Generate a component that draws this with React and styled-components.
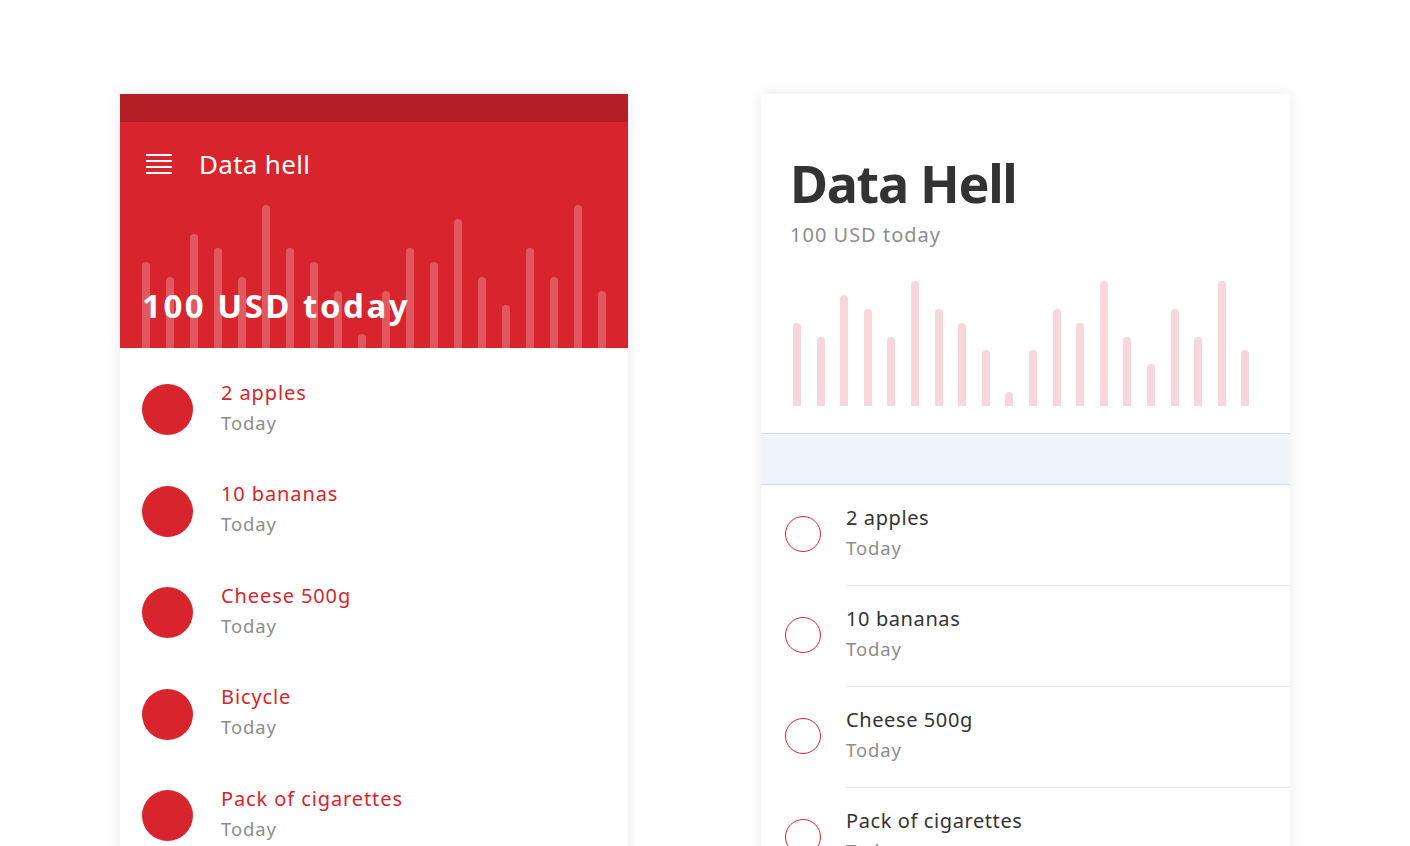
import React from "react";
import styled, { createGlobalStyle } from "styled-components";

const GlobalStyle = createGlobalStyle`
  html, body {
    margin: 0;
    padding: 0;
    background: #ffffff;
  }
  body {
    font-family: "Noto Sans", "Open Sans", Arial, sans-serif;
  }
`;

const items = ["2 apples", "10 bananas", "Cheese 500g", "Bicycle", "Pack of cigarettes"];

const redData = [6, 5, 8, 7, 5, 10, 7, 6, 4, 1, 4, 7, 6, 9, 5, 3, 7, 5, 10, 4];
const pinkData = [6, 5, 8, 7, 5, 9, 7, 6, 4, 1, 4, 7, 6, 9, 5, 3, 7, 5, 9, 4];

function MenuIcon() {
  return (
    <svg width="26" height="20" viewBox="0 0 26 20">
      {[1, 7, 13, 19].map((y) => (
        <rect key={y} x="0" y={y - 1} width="26" height="2" fill="#fff" />
      ))}
    </svg>
  );
}

function App() {
  return (
    <>
      <GlobalStyle />
      <Page>
        <PhoneCard>
          <StatusBar />
          <RedHeader>
            <Bars $left={22} $gap={16}>
              {redData.map((v, i) => (
                <RedBar key={i} style={{ height: v * 14.3 }} />
              ))}
            </Bars>
            <HeaderContent>
              <Toolbar>
                <MenuIcon />
                <ToolbarTitle>Data hell</ToolbarTitle>
              </Toolbar>
              <HeroTotal>100 USD today</HeroTotal>
            </HeaderContent>
          </RedHeader>
          <RedList>
            {items.map((name) => (
              <RedRow key={name}>
                <Dot />
                <RedText>
                  <RedTitle>{name}</RedTitle>
                  <When>Today</When>
                </RedText>
              </RedRow>
            ))}
          </RedList>
        </PhoneCard>

        <LightCard>
          <LightTop>
            <BigTitle>Data Hell</BigTitle>
            <SubTotal>100 USD today</SubTotal>
            <PinkChart>
              {pinkData.map((v, i) => (
                <PinkBar key={i} style={{ height: v * 13.9 }} />
              ))}
            </PinkChart>
          </LightTop>
          <Band />
          <LightList>
            {items
              .filter((n) => n !== "Bicycle")
              .map((name) => (
                <LightRow key={name}>
                  <Ring />
                  <LightText>
                    <DarkTitle>{name}</DarkTitle>
                    <When>Today</When>
                  </LightText>
                </LightRow>
              ))}
          </LightList>
        </LightCard>
      </Page>
    </>
  );
}

const Page = styled.div`
  height: 846px;
  overflow: hidden;
  display: flex;
  align-items: flex-start;
  padding: 94px 0 0 120px;
  box-sizing: border-box;
  gap: 133px;
`;

const PhoneCard = styled.div`
  width: 508px;
  height: 900px;
  background: #fff;
  box-shadow: 0 0 14px rgba(0, 0, 0, 0.09);
  flex-shrink: 0;
`;

const StatusBar = styled.div`
  height: 28px;
  background: #b41e25;
`;

const RedHeader = styled.div`
  height: 226px;
  background: #d8252d;
  display: grid;
  grid-template-areas: "stack";
  overflow: hidden;
`;

const Bars = styled.div`
  grid-area: stack;
  display: flex;
  align-items: flex-end;
  gap: ${(p) => p.$gap}px;
  padding-left: ${(p) => p.$left}px;
`;

const RedBar = styled.div`
  width: 8px;
  flex-shrink: 0;
  border-radius: 4px 4px 0 0;
  background: rgba(255, 255, 255, 0.24);
`;

const HeaderContent = styled.div`
  grid-area: stack;
  display: flex;
  flex-direction: column;
  justify-content: space-between;
  position: relative;
`;

const Toolbar = styled.div`
  height: 84px;
  display: flex;
  align-items: center;
  gap: 27px;
  padding-left: 26px;
  color: #fff;
`;

const ToolbarTitle = styled.div`
  font-size: 26px;
  line-height: 32px;
  letter-spacing: 0.3px;
`;

const HeroTotal = styled.div`
  color: #fff;
  font-size: 33px;
  font-weight: 700;
  line-height: 40px;
  padding: 0 0 22px 22px;
  letter-spacing: 2.5px;
`;

const RedList = styled.div`
  padding-top: 11px;
`;

const RedRow = styled.div`
  height: 101.5px;
  display: flex;
  align-items: center;
  gap: 28px;
  padding-left: 22px;
`;

const Dot = styled.div`
  width: 51px;
  height: 51px;
  border-radius: 50%;
  background: #d8252d;
  flex-shrink: 0;
`;

const RedText = styled.div`
  padding-bottom: 4px;
`;

const RedTitle = styled.div`
  color: #d8252d;
  font-size: 20px;
  line-height: 30px;
  letter-spacing: 0.9px;
`;

const When = styled.div`
  color: #8d8d8d;
  font-size: 18.5px;
  line-height: 30px;
  letter-spacing: 0.9px;
`;

const LightCard = styled.div`
  width: 529px;
  height: 900px;
  background: #fff;
  box-shadow: 0 0 14px rgba(0, 0, 0, 0.09);
  flex-shrink: 0;
`;

const LightTop = styled.div`
  padding: 59px 0 27px 29px;
`;

const BigTitle = styled.h1`
  margin: 0;
  color: #333333;
  font-size: 52px;
  line-height: 60px;
  font-weight: 700;
  letter-spacing: -1.3px;
`;

const SubTotal = styled.div`
  margin-top: 10px;
  color: #8d8d8d;
  font-size: 20px;
  line-height: 24px;
  letter-spacing: 1px;
`;

const PinkChart = styled.div`
  height: 159px;
  display: flex;
  align-items: flex-end;
  gap: 15.6px;
  padding-left: 3px;
`;

const PinkBar = styled.div`
  width: 8px;
  flex-shrink: 0;
  border-radius: 4px 4px 0 0;
  background: #f8d7dc;
`;

const Band = styled.div`
  height: 50px;
  background: #eff4fb;
  border-top: 1px solid #d3dbe4;
  border-bottom: 1px solid #d3dbe4;
`;

const LightList = styled.div``;

const LightRow = styled.div`
  display: flex;
  align-items: center;
  padding-left: 24px;
`;

const Ring = styled.div`
  width: 34px;
  height: 34px;
  margin-bottom: 3px;
  border-radius: 50%;
  border: 1.5px solid #d8252d;
  flex-shrink: 0;
`;

const LightText = styled.div`
  flex: 1;
  margin-left: 25px;
  height: 101px;
  border-bottom: 1px solid #e6e6e6;
  display: flex;
  flex-direction: column;
  justify-content: center;
  padding-bottom: 4px;
  box-sizing: border-box;
`;

const DarkTitle = styled.div`
  color: #333333;
  font-size: 20px;
  line-height: 30px;
  letter-spacing: 0.6px;
`;

export default App;
